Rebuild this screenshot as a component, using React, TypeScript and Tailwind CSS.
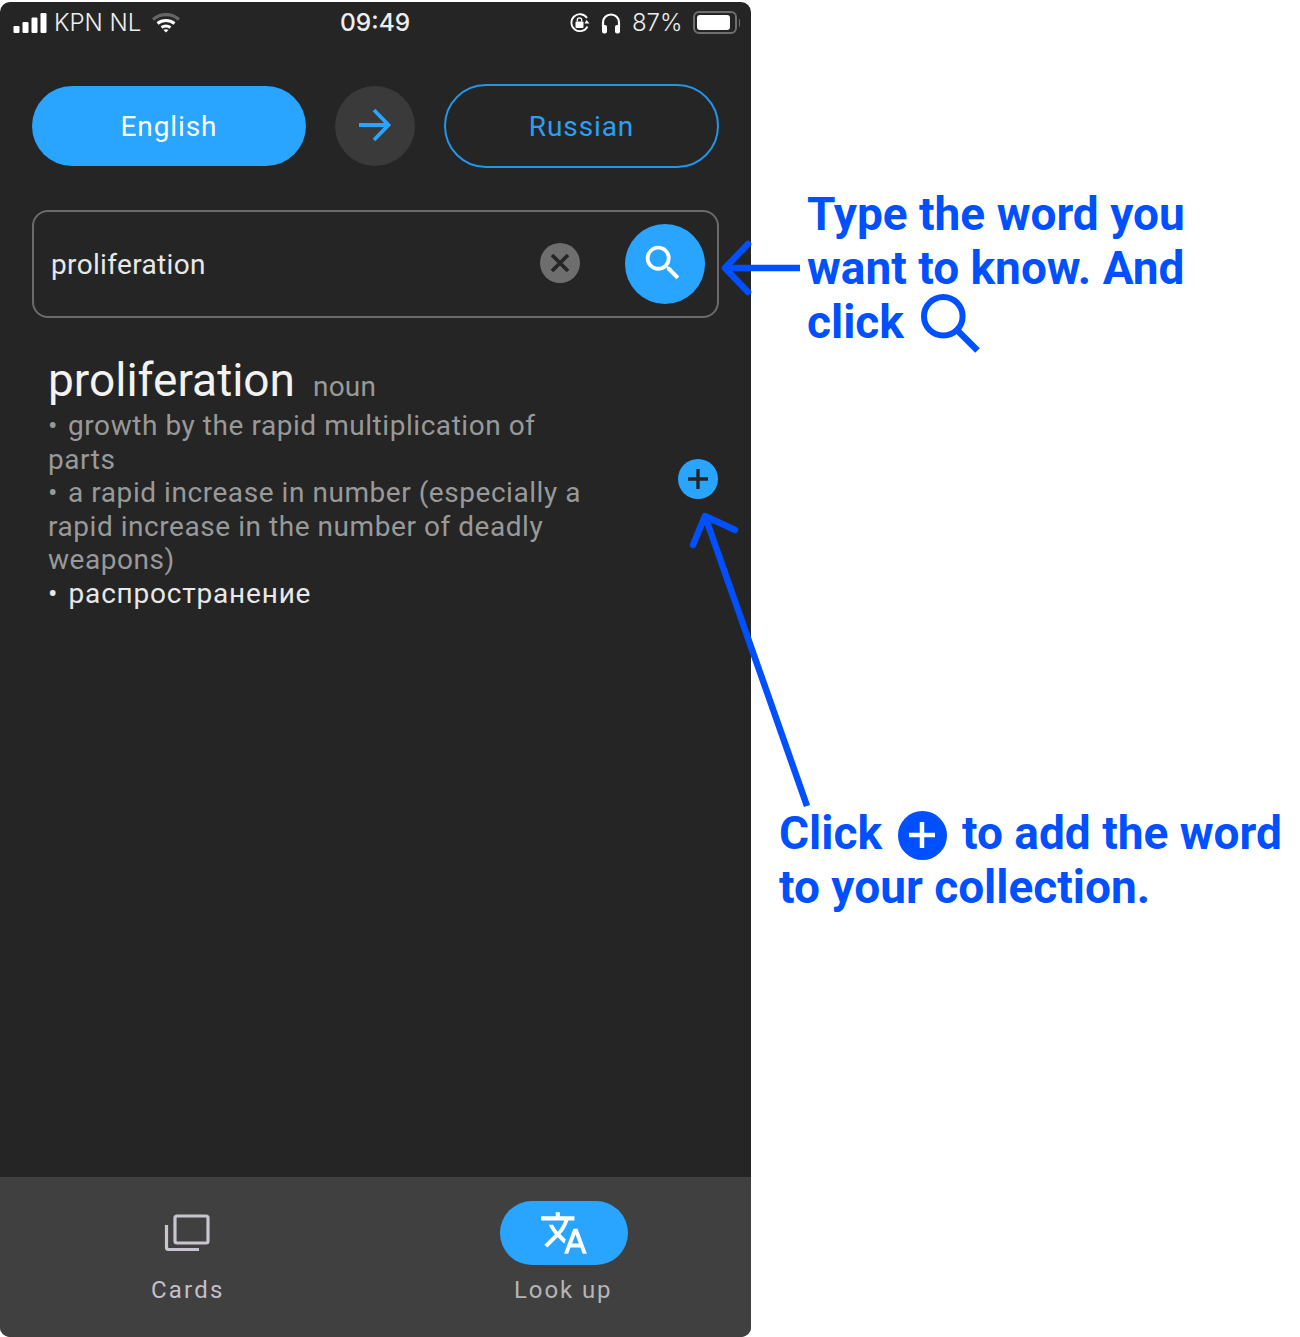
import { MdSearch, MdTranslate } from 'react-icons/md';

const ANNOTATION_BLUE = '#0050ff';

const StatusBar = () => (
  <div className="relative flex h-[42px] items-center justify-between pl-[13px] pr-[11px] pb-[1px] font-['Inter',sans-serif] text-[24px] text-[#eeeeee]">
    <div className="flex items-center">
      <svg width="34" height="22" viewBox="0 0 34 22" fill="white">
        <rect x="0.5" y="14" width="6" height="7" rx="1.2" />
        <rect x="9.5" y="10" width="6" height="11" rx="1.2" />
        <rect x="18.5" y="5.500" width="6" height="15.500" rx="1.2" />
        <rect x="27.5" y="1" width="6" height="20" rx="1.2" />
      </svg>
      <span className="ml-[7px] font-light">KPN NL</span>
      <svg className="ml-[10px]" width="30" height="24" viewBox="0 0 30 24" fill="none">
        <path d="M2 8.5C9.5 2 20.5 2 28 8.500" stroke="#666666" strokeWidth="3.200" />
        <path d="M6.500 12.500C11.500 8.500 18.500 8.500 23.500 12.500" stroke="white" strokeWidth="3" />
        <path d="M10.500 16.500C13.500 14.500 16.500 14.500 19.500 16.500" stroke="white" strokeWidth="3" />
        <path d="M12.500 19L15 21.500L17.500 19C16 18 14 18 12.500 19Z" fill="white" />
      </svg>
    </div>
    <span className="absolute left-[340px] top-[2px] text-[24.500px] font-medium">09:49</span>
    <div className="flex items-center">
      <svg width="22" height="22" viewBox="0 0 22 22" fill="none">
        <path d="M18.500 14.500A8.500 8.500 0 1 1 18 6" stroke="white" strokeWidth="1.800" />
        <path d="M15.500 8.500L20.500 8.500L18.500 12Z" fill="white" transform="rotate(180 18 10)" />
        <rect x="6.500" y="9.500" width="8" height="6.500" rx="1" fill="white" />
        <path d="M8.300 9.500V8a2.200 2.200 0 0 1 4.400 0V9.500" stroke="white" strokeWidth="1.300" />
      </svg>
      <svg className="ml-[10px]" width="20" height="22" viewBox="0 0 20 22" fill="none">
        <path d="M2 15V10.500a8 8 0 0 1 16 0V15" stroke="white" strokeWidth="2.200" />
        <rect x="1" y="13" width="5" height="8.500" rx="2" fill="white" />
        <rect x="14" y="13" width="5" height="8.500" rx="2" fill="white" />
      </svg>
      <span className="ml-[11px] font-light">87%</span>
      <div className="ml-[10px] flex items-center">
        <div className="flex h-[23px] w-[44px] items-center rounded-[6px] border-2 border-[#6f6f6f] p-[2px]">
          <div className="h-full w-[33px] rounded-[3px] bg-white" />
        </div>
        <div className="ml-[2px] h-[8px] w-[1.500px] rounded-r-sm bg-[#6f6f6f]" />
      </div>
    </div>
  </div>
);

const LanguageRow = () => (
  <div className="mt-[40px] flex items-center pl-[32px] pr-[32px]">
    <button className="flex h-[80px] w-[274px] items-center justify-center rounded-full bg-[#29a4ff] pt-[1px] text-[28px] tracking-[0.9px] text-white">
      English
    </button>
    <div className="ml-[29px] flex h-[80px] w-[80px] items-center justify-center rounded-full bg-[#3a3a3a]">
      <svg className="-mt-[2px]" width="36" height="36" viewBox="0 0 36 36" fill="none" stroke="#29a4ff" strokeWidth="3.800">
        <path d="M2 18H31" />
        <path d="M17 3L31.500 18L17 33" />
      </svg>
    </div>
    <button className="ml-[29px] flex h-[84px] w-[275px] items-center justify-center rounded-full border-2 border-[#2196e8] pt-[1px] text-[28px] tracking-[0.9px] text-[#2ba0f2]">
      Russian
    </button>
  </div>
);

const SearchBox = () => (
  <div className="mx-[32px] mt-[42px] flex h-[108px] w-[687px] items-center rounded-[16px] border-2 border-[#6b6b6b] pl-[17px] pr-[12px]">
    <span className="flex-1 pt-[1px] text-[28px] tracking-[0.35px] text-[#e8e8e8]">proliferation</span>
    <div className="-mt-[2px] flex h-[40px] w-[40px] items-center justify-center rounded-full bg-[#6e6e6e]">
      <svg width="20" height="20" viewBox="0 0 20 20" stroke="#252525" strokeWidth="3.600">
        <path d="M2 2L18 18M18 2L2 18" />
      </svg>
    </div>
    <div className="ml-[45px] flex h-[80px] w-[80px] items-center justify-center rounded-full bg-[#29a4ff]">
      <MdSearch className="-ml-[4px] -mt-[2px]" size={46} color="white" />
    </div>
  </div>
);

const Definition = () => (
  <div className="relative mt-[35px] pl-[48px]">
    <div className="flex items-baseline">
      <span className="text-[46px] leading-[54px] text-[#f2f2f2]">proliferation</span>
      <span className="ml-[18px] text-[28px] tracking-[0.2px] text-[#999999]">noun</span>
    </div>
    <div className="mt-[1px] w-[540px] text-[28px] leading-[33.600px] tracking-[0.55px] text-[#999999]">
      <p>{'•\u2004growth by the rapid multiplication of parts'}</p>
      <p>{'•\u2004a rapid increase in number (especially a rapid increase in the number of deadly weapons)'}</p>
      <p className="tracking-[0.8px] text-[#e8e8e8]">{'•\u2004распространение'}</p>
    </div>
    <div className="absolute left-[678px] top-[106px] flex h-[40px] w-[40px] items-center justify-center rounded-full bg-[#29a4ff]">
      <svg width="20" height="20" viewBox="0 0 20 20" stroke="#252525" strokeWidth="3.400">
        <path d="M10 0V20M0 10H20" />
      </svg>
    </div>
  </div>
);

const BottomNav = () => (
  <div className="grid h-[160px] grid-cols-2 bg-[#404040]">
    <div className="flex flex-col items-center pt-[24px]">
      <div className="-ml-[2px] flex h-[64px] items-center justify-center">
        <svg width="46" height="38" viewBox="0 0 46 38" fill="none" stroke="#cac4d0" strokeWidth="3.200">
          <rect x="11" y="2" width="33" height="27" rx="2" />
          <path d="M2.500 11V33.500a2 2 0 0 0 2 2H35" />
        </svg>
      </div>
      <span className="mt-[7px] text-[24px] tracking-[2.200px] text-[#c4bfca]">Cards</span>
    </div>
    <div className="flex flex-col items-center pt-[24px]">
      <div className="ml-[2px] flex h-[64px] w-[128px] items-center justify-center rounded-full bg-[#29a4ff]">
        <MdTranslate size={50} color="white" />
      </div>
      <span className="mt-[7px] text-[24px] tracking-[1.900px] text-[#b5b5b5]">Look up</span>
    </div>
  </div>
);

const Annotations = () => (
  <div className="flex-1 text-[46px] font-bold leading-[54px] text-[#0050ff]">
    <div className="ml-[56px] mt-[187px] whitespace-nowrap">
      <p>Type the word you</p>
      <p>want to know. And</p>
      <p className="flex h-[54px] items-center">
        click
        <svg className="ml-[17px] mt-[4px] shrink-0" width="60" height="60" viewBox="0 0 60 60" fill="none" stroke={ANNOTATION_BLUE} strokeWidth="6">
          <circle cx="22.300" cy="22.300" r="19.300" />
          <path d="M36 36L56.500 56.500" strokeWidth="6.500" />
        </svg>
      </p>
    </div>
    <div className="ml-[28px] mt-[457px] whitespace-nowrap">
      <p className="flex h-[54px] items-center">
        Click
        <span className="ml-[16px] mr-[15px] mt-[4px] flex h-[49px] w-[49px] items-center justify-center rounded-full bg-[#0050ff]">
          <svg width="26" height="26" viewBox="0 0 26 26" stroke="white" strokeWidth="4.500">
            <path d="M13 0V26M0 13H26" />
          </svg>
        </span>
        to add the word
      </p>
      <p>to your collection.</p>
    </div>
  </div>
);

// arrows run over the phone edge, so they sit on top of the page
const Arrows = () => (
  <svg className="pointer-events-none absolute left-0 top-0" width="1300" height="1337" viewBox="0 0 1300 1337" fill="none" stroke={ANNOTATION_BLUE} strokeWidth="6.500">
    <path d="M800 268H726" />
    <path d="M748 244L725 268L748 292" strokeLinecap="round" strokeLinejoin="round" />
    <path d="M807 806L705 516" />
    <path d="M693 545L705 516L735 530" strokeLinecap="round" strokeLinejoin="round" />
  </svg>
);

export default function App() {
  return (
    <div className="relative flex h-[1337px] w-[1300px] overflow-hidden bg-white font-['Roboto',sans-serif]">
      <div className="mt-[2px] flex h-[1335px] w-[751px] flex-col overflow-hidden rounded-[10px] bg-[#252525]">
        <StatusBar />
        <LanguageRow />
        <SearchBox />
        <Definition />
        <div className="flex-1" />
        <BottomNav />
      </div>
      <Annotations />
      <Arrows />
    </div>
  );
}
